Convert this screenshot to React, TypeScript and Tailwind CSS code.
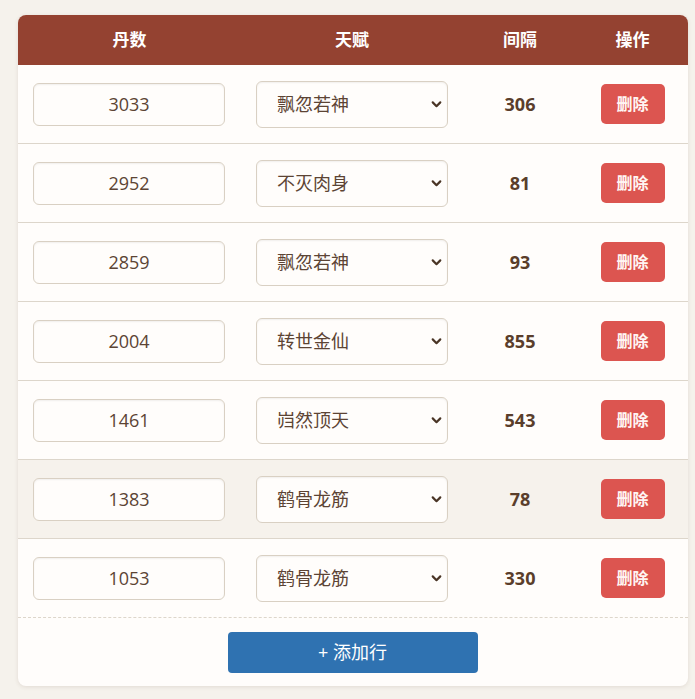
import { useState } from "react";

const talents = ["飘忽若神", "不灭肉身", "转世金仙", "岿然顶天", "鹤骨龙筋"];

type Row = { id: number; dan: string; talent: string; gap: number };

const initialRows: Row[] = [
  { id: 1, dan: "3033", talent: "飘忽若神", gap: 306 },
  { id: 2, dan: "2952", talent: "不灭肉身", gap: 81 },
  { id: 3, dan: "2859", talent: "飘忽若神", gap: 93 },
  { id: 4, dan: "2004", talent: "转世金仙", gap: 855 },
  { id: 5, dan: "1461", talent: "岿然顶天", gap: 543 },
  { id: 6, dan: "1383", talent: "鹤骨龙筋", gap: 78 },
  { id: 7, dan: "1053", talent: "鹤骨龙筋", gap: 330 },
];

const font = { fontFamily: '"Open Sans", "Noto Sans CJK SC", sans-serif' };

export default function App() {
  const [rows, setRows] = useState<Row[]>(initialRows);

  const updateRow = (id: number, patch: Partial<Row>) => {
    setRows(rows.map((r) => (r.id === id ? { ...r, ...patch } : r)));
  };

  const removeRow = (id: number) => setRows(rows.filter((r) => r.id !== id));

  const addRow = () => {
    const nextId = rows.length ? Math.max(...rows.map((r) => r.id)) + 1 : 1;
    setRows([...rows, { id: nextId, dan: "", talent: talents[0], gap: 0 }]);
  };

  return (
    <div className="min-h-screen bg-[#f5f2ec] pl-[18px] pt-[15px] pb-3" style={font}>
      <div className="w-[670px] overflow-hidden rounded-lg bg-[#fffdfb] shadow-[0_1px_4px_rgba(90,60,40,0.12)]">
        {/* 表头 */}
        <div className="grid h-[50px] grid-cols-[223px_222px_114px_111px] items-center bg-[#944231] text-[17px] font-bold text-white">
          <div className="text-center">丹数</div>
          <div className="text-center">天赋</div>
          <div className="text-center">间隔</div>
          <div className="text-center">操作</div>
        </div>

        {rows.map((row, i) => (
          <div
            key={row.id}
            className={`grid h-[79px] grid-cols-[223px_222px_114px_111px] items-center border-b border-[#ddd6cb] ${
              i === 5 ? "bg-[#f6f2ec]" : "bg-[#fffdfb]"
            } ${i === rows.length - 1 ? "border-dashed border-[#cfc6b8]" : ""}`}
          >
            <div className="pl-[15px]">
              <input
                value={row.dan}
                onChange={(e) => updateRow(row.id, { dan: e.target.value })}
                className="h-[43px] w-[192px] rounded-[6px] border border-[#d9d0c3] bg-[#fffdfb] text-center text-[18px] text-[#5c4434] shadow-[inset_0_1px_2px_rgba(0,0,0,0.06)] outline-none"
              />
            </div>
            <div className="pl-[15px]">
              <div className="relative w-[192px]">
                <select
                  value={row.talent}
                  onChange={(e) => updateRow(row.id, { talent: e.target.value })}
                  className="h-[47px] w-full appearance-none rounded-[6px] border border-[#d9d0c3] bg-[#fffdfb] pl-5 text-[18px] text-[#5c4434] shadow-[inset_0_1px_2px_rgba(0,0,0,0.06)] outline-none"
                >
                  {talents.map((t) => (
                    <option key={t} value={t}>
                      {t}
                    </option>
                  ))}
                </select>
                <svg
                  className="pointer-events-none absolute right-[5px] top-1/2 -translate-y-1/2"
                  width="13"
                  height="13"
                  viewBox="0 0 12 12"
                >
                  <path d="M2.5 4.5 L6 8 L9.5 4.5" fill="none" stroke="#4a3526" strokeWidth="2" strokeLinecap="round" strokeLinejoin="round" />
                </svg>
              </div>
            </div>
            <div className="text-center text-[18px] font-bold text-[#5a3e2b]">{row.gap}</div>
            <div className="flex justify-center">
              <button
                onClick={() => removeRow(row.id)}
                className="h-[40px] w-[64px] rounded-[5px] bg-[#dc5550] text-[16px] font-bold text-[#fff5f3]"
              >
                删除
              </button>
            </div>
          </div>
        ))}

        {/* 底部 */}
        <div className="flex h-[68px] items-center justify-center">
          <button
            onClick={addRow}
            className="mr-[1px] h-[41px] w-[250px] rounded-[4px] bg-[#2f72b1] text-[18px] text-white"
          >
            + 添加行
          </button>
        </div>
      </div>
    </div>
  );
}
